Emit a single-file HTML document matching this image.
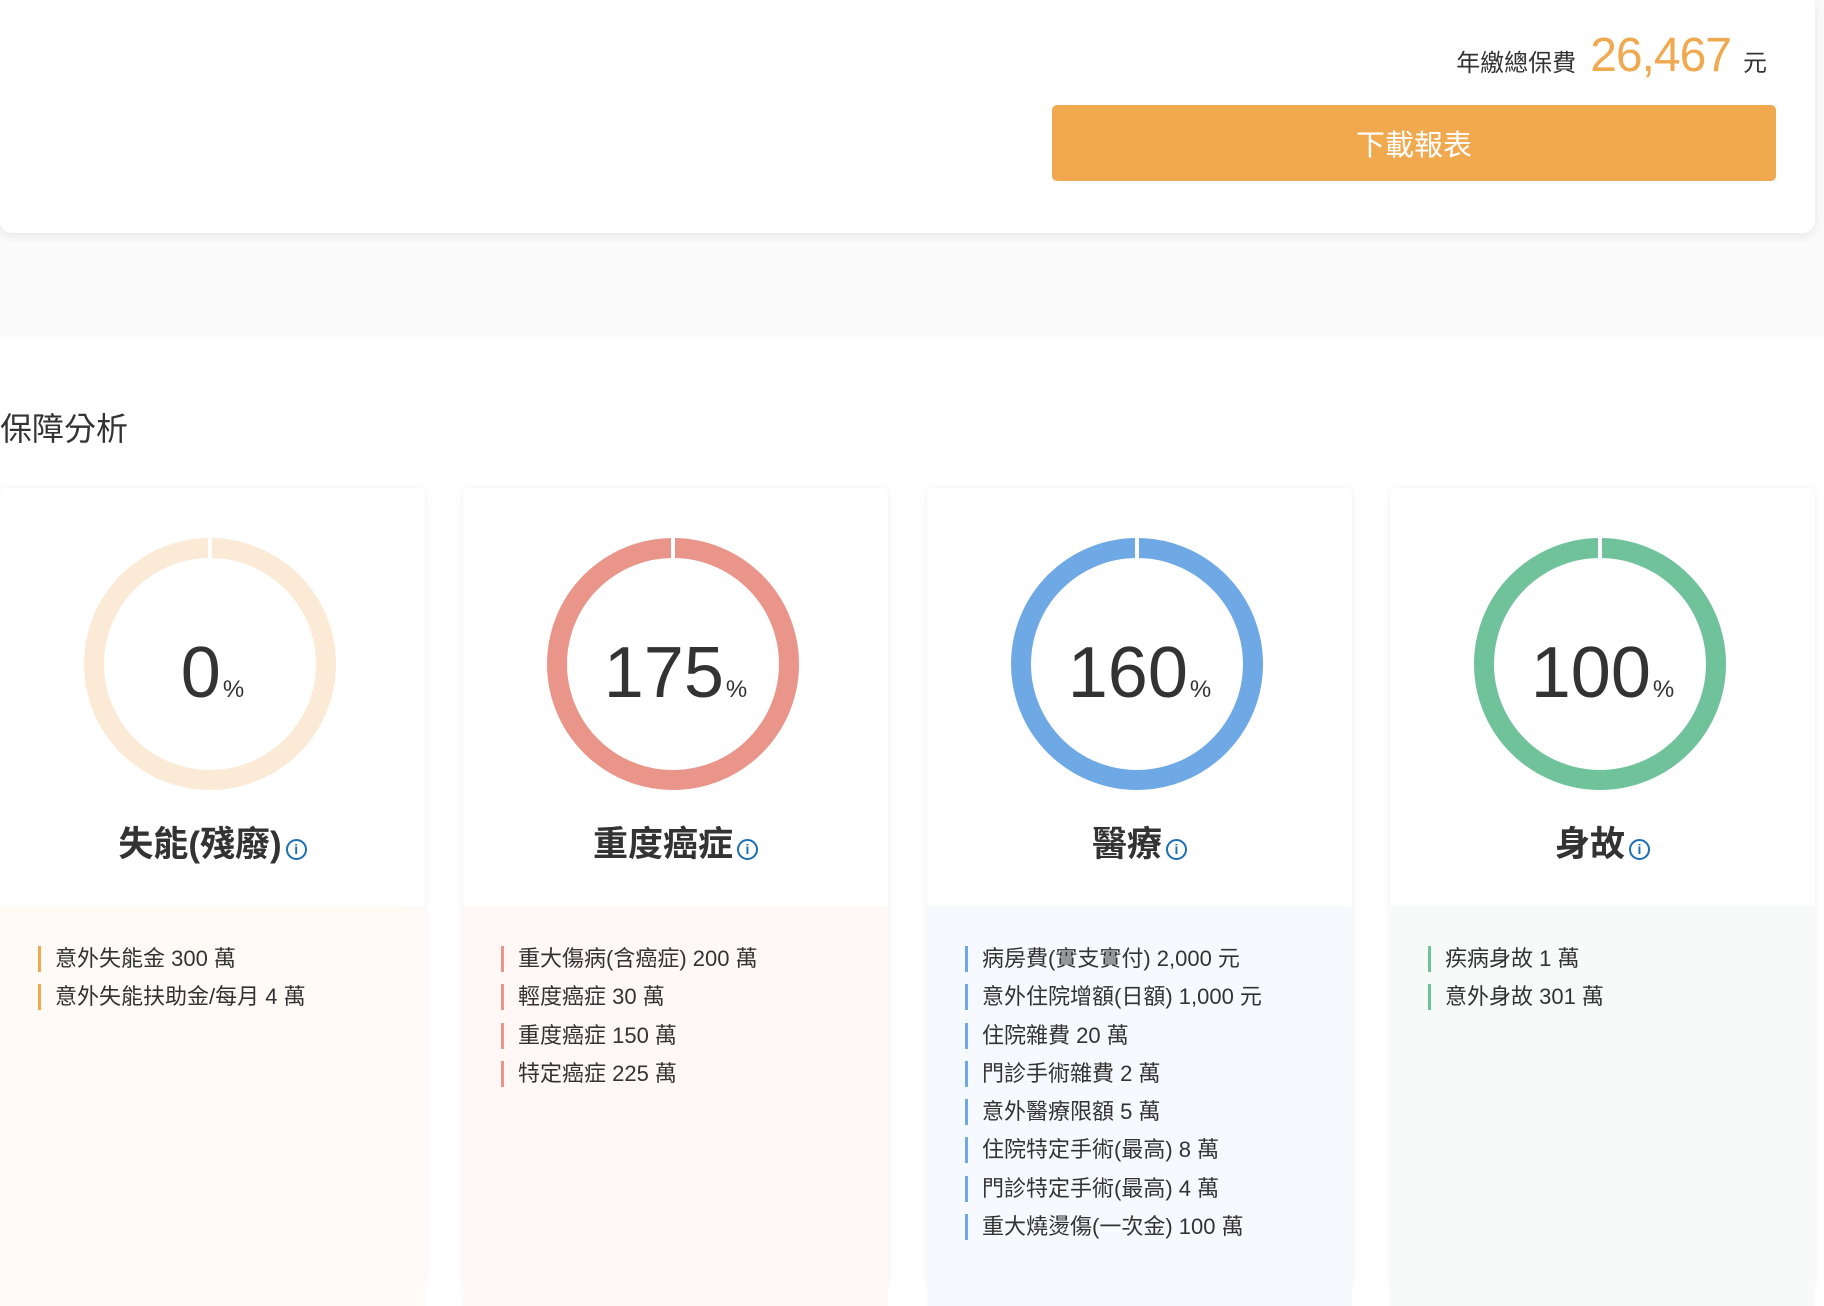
<!DOCTYPE html>
<html><head><meta charset="utf-8"><style>
*{margin:0;padding:0;box-sizing:border-box}
body{width:1824px;height:1264px;overflow:hidden;background:#fff;font-family:"Liberation Sans","Noto Sans CJK TC",sans-serif;color:#333;position:relative}
.top{position:absolute;left:0;top:0;width:1815px;height:233px;background:#fff;border-radius:0 0 12px 12px;box-shadow:0 3px 10px rgba(0,0,0,.08);z-index:2}
.gray{position:absolute;left:0;top:0;width:1824px;height:337px;background:#fafafa}
.total{position:absolute;right:48px;top:28px;display:flex;align-items:baseline}
.total .l{font-size:24px;color:#333}
.total .n{font-size:48px;color:#f0a94f;margin:0 12px 0 14px;letter-spacing:-1px}
.total .u{font-size:24px}
.btn{position:absolute;left:1052px;top:105px;width:724px;height:76px;background:#f0a94f;border-radius:5px;color:#fff;font-size:29px;display:flex;align-items:center;justify-content:center}
h2{position:absolute;left:0;top:404px;font-size:32px;font-weight:normal;color:#333}
.card{position:absolute;top:488px;width:425px;height:800px;background:#fff;box-shadow:0 0 8px rgba(0,0,0,.06);border-radius:6px}
.ring{position:absolute;left:84px;top:50px}
.pct{position:absolute;left:0;width:100%;top:144px;text-align:center;font-size:72px;color:#333}
.pct small{font-size:24px;margin-left:2px}
.title{position:absolute;left:0;width:100%;top:328px;text-align:center;font-size:35px;font-weight:bold;color:#333}
.info{display:inline-block;width:21px;height:21px;border:2.5px solid #1a6fb5;border-radius:50%;color:#1a6fb5;font-size:14px;line-height:16px;text-align:center;vertical-align:2px;font-weight:bold;margin-left:4px}
.low{position:absolute;left:0;top:418px;width:100%;height:400px;padding-top:36px}
.low div{position:relative;padding-left:55px;font-size:22px;height:38.3px;line-height:34px}
.low div:before{content:"";position:absolute;left:38px;top:4px;width:3px;height:26px;background:var(--c)}
</style></head><body>
<div class="gray"></div>
<div class="top">
<div class="total"><span class="l">年繳總保費</span><span class="n">26,467</span><span class="u">元</span></div>
<div class="btn">下載報表</div>
</div>
<h2>保障分析</h2>

<div class="card" style="left:0">
<svg class="ring" width="252" height="252"><circle cx="126" cy="126" r="116" fill="none" stroke="#fbead6" stroke-width="20"/><rect x="124" y="0" width="4" height="22" fill="#fff"/></svg>
<div class="pct">0<small>%</small></div>
<div class="title">失能(殘廢)<span class="info">i</span></div>
<div class="low" style="background:#fffaf5;--c:#f0a94f"><div>意外失能金 300 萬</div><div>意外失能扶助金/每月 4 萬</div></div>
</div>

<div class="card" style="left:463px">
<svg class="ring" width="252" height="252"><circle cx="126" cy="126" r="116" fill="none" stroke="#e9958a" stroke-width="20"/><rect x="124" y="0" width="4" height="22" fill="#fff"/></svg>
<div class="pct">175<small>%</small></div>
<div class="title">重度癌症<span class="info">i</span></div>
<div class="low" style="background:#fff8f7;--c:#e9958a"><div>重大傷病(含癌症) 200 萬</div><div>輕度癌症 30 萬</div><div>重度癌症 150 萬</div><div>特定癌症 225 萬</div></div>
</div>

<div class="card" style="left:927px">
<svg class="ring" width="252" height="252"><circle cx="126" cy="126" r="116" fill="none" stroke="#6ea8e5" stroke-width="20"/><rect x="124" y="0" width="4" height="22" fill="#fff"/></svg>
<div class="pct">160<small>%</small></div>
<div class="title">醫療<span class="info">i</span></div>
<div class="low" style="background:#f6f9fd;--c:#6ea8e5"><div>病房費(實支實付) 2,000 元</div><div>意外住院增額(日額) 1,000 元</div><div>住院雜費 20 萬</div><div>門診手術雜費 2 萬</div><div>意外醫療限額 5 萬</div><div>住院特定手術(最高) 8 萬</div><div>門診特定手術(最高) 4 萬</div><div>重大燒燙傷(一次金) 100 萬</div></div>
</div>

<div class="card" style="left:1390px">
<svg class="ring" width="252" height="252"><circle cx="126" cy="126" r="116" fill="none" stroke="#6fc29a" stroke-width="20"/><rect x="124" y="0" width="4" height="22" fill="#fff"/></svg>
<div class="pct">100<small>%</small></div>
<div class="title">身故<span class="info">i</span></div>
<div class="low" style="background:#f6fbf9;--c:#6fc29a"><div>疾病身故 1 萬</div><div>意外身故 301 萬</div></div>
</div>
</body></html>
